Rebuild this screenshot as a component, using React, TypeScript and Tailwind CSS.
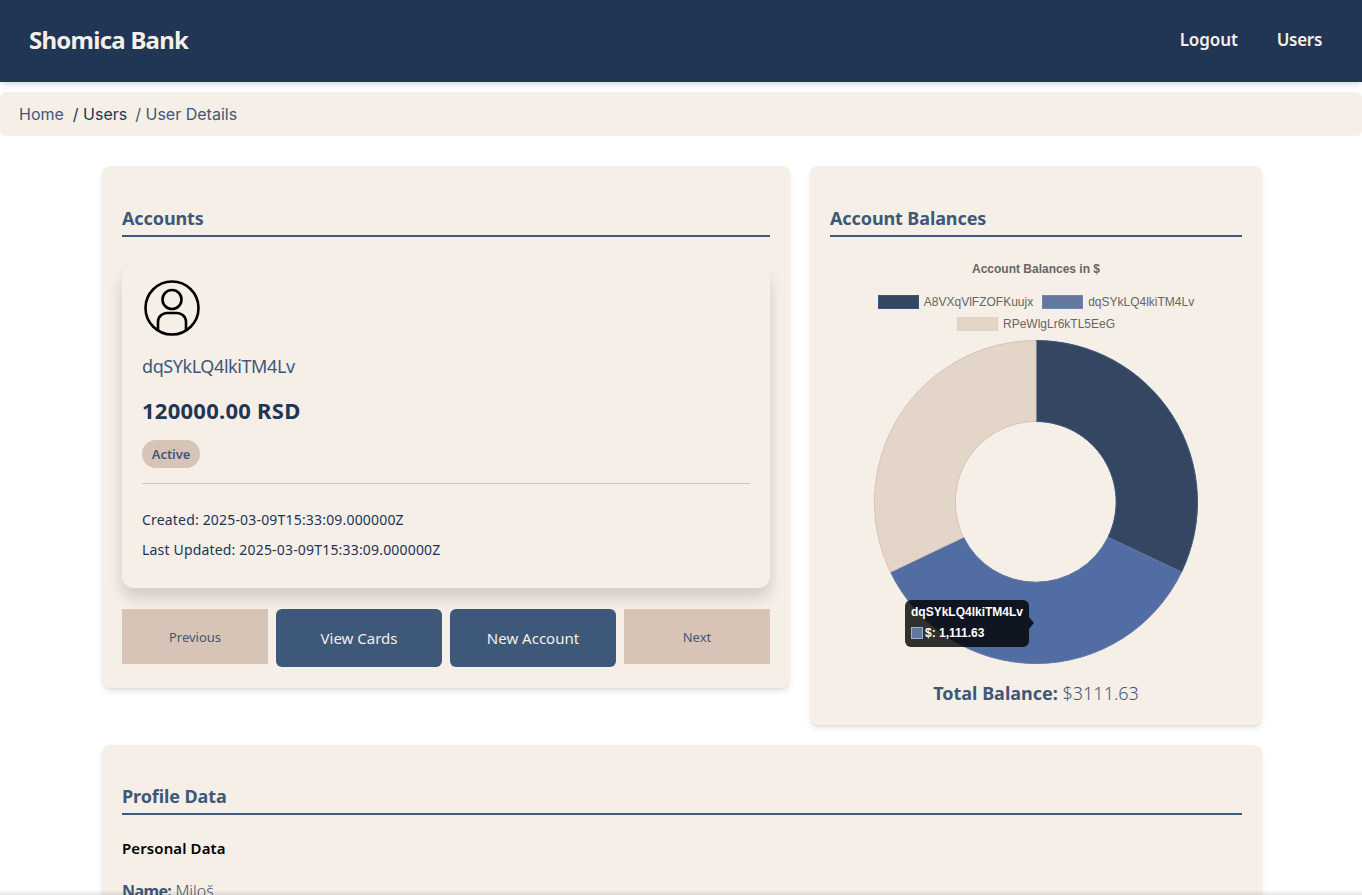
import React from "react";

const sans = "font-['Noto_Sans',sans-serif]";

function Heading({ children }: { children: React.ReactNode }) {
  return (
    <h2 className="border-b-2 border-[#3e5879] pb-1 text-[18px] leading-[26px] font-bold tracking-[-0.1px] text-[#3e5879]">
      {children}
    </h2>
  );
}

function UserIcon() {
  return (
    <svg width="60" height="60" viewBox="0 0 60 60" fill="none" stroke="#000" strokeWidth="2.6">
      <circle cx="30" cy="30" r="26.5" />
      <circle cx="30" cy="21.500" r="9.500" />
      <path d="M16 52v-8c0-6 5-9 9-9h10c4 0 9 3 9 9v8" />
    </svg>
  );
}

function Donut() {
  return (
    <svg width="324" height="324" viewBox="0 0 324 324" className="block">
      <path
        d="M162 .5A161.500 161.500 0 0 1 307.500 232.100L234 197.200A80.500 80.500 0 0 0 162 81.500Z"
        fill="#354663"
        stroke="#3e5879"
      />
      <path
        d="M307.500 232.100A161.500 161.500 0 0 1 16.500 232.100L89.500 197.200A80.500 80.500 0 0 0 234 197.200Z"
        fill="#526da3"
        stroke="#5f78a5"
      />
      <path
        d="M16.500 232.100A161.500 161.500 0 0 1 162 .5V81.500A80.500 80.500 0 0 0 89.500 197.200Z"
        fill="#e3d5c8"
        stroke="#d8c4b6"
      />
    </svg>
  );
}

function LegendItem({ color, border, label }: { color: string; border: string; label: string }) {
  return (
    <div className="flex items-center gap-[5px]">
      <span className={`h-[14px] w-[41px] border ${color} ${border}`} />
      <span>{label}</span>
    </div>
  );
}

export default function App() {
  return (
    <div className={`relative h-screen overflow-hidden bg-white ${sans} text-[#213555]`}>
      <header className="flex h-[82px] items-center justify-between bg-[#213555] pr-10 pb-[2px] pl-[29px] shadow-md">
        <div className="text-[24px] font-bold tracking-[-0.75px] text-[#f5efe7]">Shomica Bank</div>
        <nav className="flex gap-[39px] text-[17px] font-semibold tracking-[-0.1px] text-[#f5efe7]">
          <span>Logout</span>
          <span className="tracking-[-0.3px]">Users</span>
        </nav>
      </header>

      <div className="mt-[10px] flex h-[44px] items-center rounded-md bg-[#f5efe7] pl-[19px] font-['Inter',sans-serif] text-[16px] text-[#3e5879]">
        <span>Home</span>
        <span className="ml-[9px] text-[#213555]">/ Users</span>
        <span className="ml-2">/ User Details</span>
      </div>

      <main className="mt-[30px] ml-[102px] w-[1160px]">
        <div className="flex items-start gap-5">
          <section className="w-[688px] rounded-lg bg-[#f5efe7] px-5 pt-[39px] pb-[21px] shadow-md">
            <Heading>Accounts</Heading>

            <div className="mt-7 h-[323px] rounded-xl bg-[#f5efe7] px-5 pt-[13px] shadow-[0_10px_15px_rgba(0,0,0,0.15)]">
              <UserIcon />
              <div className="mt-[15px] text-[18px] leading-[26px] tracking-[-0.42px] text-[#3e5879]">dqSYkLQ4lkiTM4Lv</div>
              <div className="mt-4 text-[22px] leading-[30px] font-bold tracking-[0.25px]">120000.00 RSD</div>
              <span className="mt-[15px] flex h-[28px] w-[58px] items-center justify-center rounded-full bg-[#d8c4b6] pt-[2px] text-[13px] font-semibold tracking-[-0.1px] text-[#3e5879]">
                Active
              </span>
              <div className="mt-[15px] border-t border-[#d8c4b6]" />
              <div className="mt-[26px] text-[14px] leading-[20px] tracking-[0.18px]">Created: 2025-03-09T15:33:09.000000Z</div>
              <div className="mt-[10px] text-[14px] leading-[20px] tracking-[0.18px]">Last Updated: 2025-03-09T15:33:09.000000Z</div>
            </div>

            <div className="mt-[21px] flex items-start gap-2">
              <button className="h-[55px] w-[146px] bg-[#d8c4b6] pt-[2px] text-[13px] text-[#3e5879]">Previous</button>
              <button className="h-[58px] w-[166px] rounded-md bg-[#3e5879] text-[15px] text-[#f5efe7]">View Cards</button>
              <button className="h-[58px] w-[166px] rounded-md bg-[#3e5879] text-[15px] text-[#f5efe7]">New Account</button>
              <button className="h-[55px] w-[146px] bg-[#d8c4b6] pt-[2px] text-[13px] text-[#3e5879]">Next</button>
            </div>
          </section>

          <section className="w-[452px] rounded-lg bg-[#f5efe7] px-5 pt-[39px] pb-[19px] shadow-md">
            <Heading>Account Balances</Heading>

            <div className="mt-[25px] flex flex-col items-center font-['Liberation_Sans',sans-serif] text-[12px] leading-[14px] text-[#666]">
              <div className="font-bold">Account Balances in $</div>
              <div className="mt-[19px] flex gap-[9px]">
                <LegendItem color="bg-[#354663]" border="border-[#3e5879]" label="A8VXqVlFZOFKuujx" />
                <LegendItem color="bg-[#64789f]" border="border-[#7186ab]" label="dqSYkLQ4lkiTM4Lv" />
              </div>
              <div className="mt-2">
                <LegendItem color="bg-[#e3d5c8]" border="border-[#e3cfc0]" label="RPeWlgLr6kTL5EeG" />
              </div>
              <div className="relative mt-[9px]">
                <Donut />
                <div className="absolute top-[260px] left-[31px] h-[47px] w-[124px] rounded-md bg-black/80 px-[6px] pt-[5px] text-white">
                  <div className="font-bold">dqSYkLQ4lkiTM4Lv</div>
                  <div className="mt-[7px] flex items-center font-bold">
                    <span className="mr-[2px] h-[12px] w-[12px] border border-[#9fb0cc] bg-[#64789f]" />
                    $: 1,111.63
                  </div>
                  <span className="absolute top-[17px] -right-[5px] h-0 w-0 border-y-[6px] border-l-[5px] border-y-transparent border-l-black/80" />
                </div>
              </div>
            </div>

            <div className="mt-[16px] text-center text-[18px] leading-[26px] text-[#3e5879]">
              <b>Total Balance:</b> <span className="font-light">$3111.63</span>
            </div>
          </section>
        </div>

        <section className="mt-5 rounded-lg bg-[#f5efe7] px-5 pt-[38px] pb-10 shadow-md">
          <Heading>Profile Data</Heading>
          <h3 className="mt-[22px] text-[15px] leading-[22px] font-semibold tracking-[0.1px] text-black">Personal Data</h3>
          <p className="mt-5 text-[16px] text-[#3e5879]">
            <b className="tracking-[-0.6px]">Name:</b> <span className="font-light">Miloš</span>
          </p>
        </section>
      </main>

      <div className="absolute inset-x-0 bottom-0 h-[5px] bg-gradient-to-b from-transparent to-black/10" />
    </div>
  );
}
